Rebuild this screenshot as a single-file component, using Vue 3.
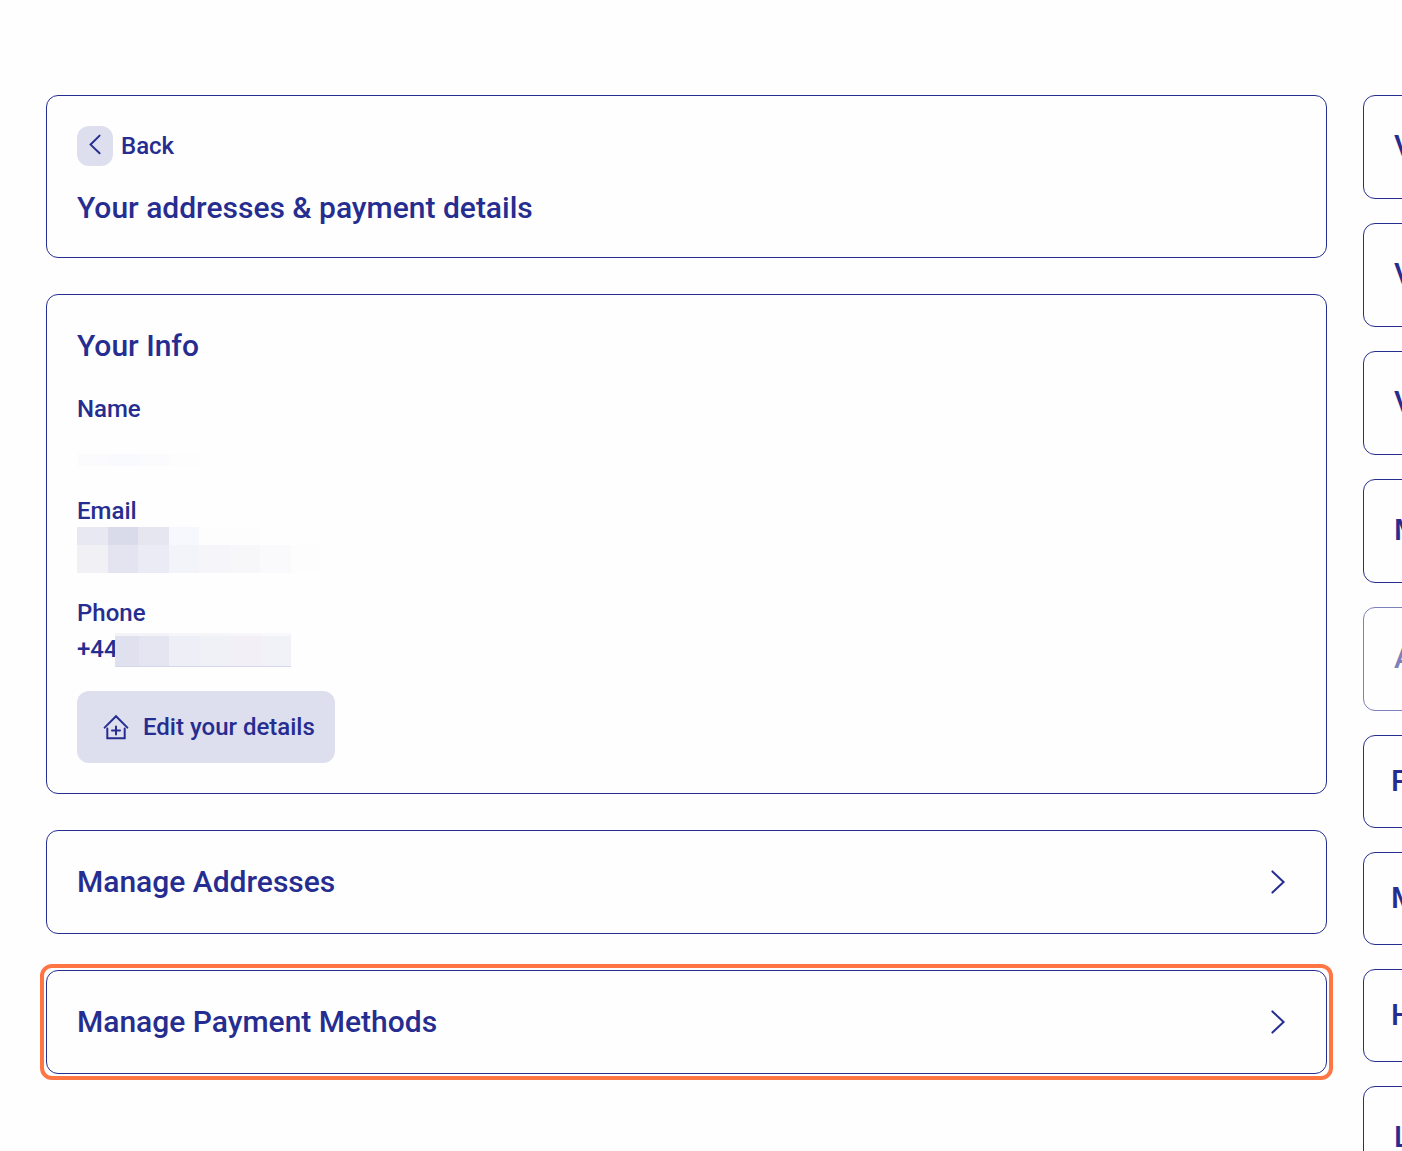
<template>
  <div class="account">
    <main class="content">
      <header class="card card-header">
        <button type="button" class="back">
          <span class="back-icon">
            <svg width="36" height="40" viewBox="0 0 36 40" aria-hidden="true">
              <path d="M22.6 9.6 13.6 18.6 22.6 27.2" />
            </svg>
          </span>
          Back
        </button>
        <h1>Your addresses &amp; payment details</h1>
      </header>

      <section class="card card-info">
        <h2>Your Info</h2>
        <dl>
          <div v-for="field in fields" :key="field.id" class="field">
            <dt>{{ field.label }}</dt>
            <dd>
              {{ field.value }}
              <span :class="['mask', `mask-${field.id}`]">
                <span v-for="(row, r) in field.mask" :key="r" class="mask-row">
                  <i v-for="(color, c) in row" :key="c" :style="{ background: color }"></i>
                </span>
              </span>
            </dd>
          </div>
        </dl>
        <button type="button" class="edit">
          <svg width="38" height="38" viewBox="0 0 38 38" aria-hidden="true">
            <path d="M7.6 19.6 19 8.2 30.4 19.6M10.3 20.6V30.2H27.7V20.6M19 18.4V26.4M15 22.4H23" />
          </svg>
          Edit your details
        </button>
      </section>

      <button
        v-for="link in links"
        :key="link.text"
        type="button"
        :class="['card', 'card-link', { highlighted: link.highlighted }]"
      >
        {{ link.text }}
        <svg width="36" height="36" viewBox="0 0 36 36" aria-hidden="true">
          <path d="M12.4 7.4 23.6 18 12.4 28.6" />
        </svg>
      </button>
    </main>

    <nav class="sidebar">
      <button
        v-for="(item, i) in menu"
        :key="i"
        type="button"
        :class="['card', 'menu-item', { compact: item.compact }]"
        :disabled="item.disabled"
      >
        {{ item.text }}
      </button>
    </nav>
  </div>
</template>

<script setup>
const fields = [
  {
    id: 'name',
    label: 'Name',
    value: '',
    mask: [['#fbfbfd', '#f9fafd', '#fbfbfd', '#fdfdfe']],
  },
  {
    id: 'email',
    label: 'Email',
    value: '',
    mask: [
      ['#e8e8f2', '#d9dbea', '#e6e6f0', '#f7f8fd', '#fdfdfd', '#fdfdfd', '#fefefe', '#fefefe'],
      ['#f0f0f5', '#e4e4f1', '#ebebf5', '#f3f4fa', '#f6f5fa', '#f7f7fa', '#fafafc', '#fdfdfd'],
    ],
  },
  {
    id: 'phone',
    label: 'Phone',
    value: '+44',
    mask: [
      ['#f3f3f8', '#f3f3f8', '#f5f5fa', '#f6f6f9', '#f7f6f9', '#f9f9fb'],
      ['#dfe1ee', '#e5e5f1', '#eeeef7', '#f0f1f6', '#f2f0f6', '#f1f2f7'],
    ],
  },
]

const links = [
  { text: 'Manage Addresses' },
  { text: 'Manage Payment Methods', highlighted: true },
]

const menu = [
  { text: 'V' },
  { text: 'V' },
  { text: 'V' },
  { text: 'M' },
  { text: 'A', disabled: true },
  { text: 'P', compact: true },
  { text: 'M', compact: true },
  { text: 'H', compact: true },
  { text: 'L' },
]
</script>

<style>
body {
  margin: 0;
  background: #fefefe;
}
</style>

<style scoped>
.account {
  --blue: #262d90;
  --tint: #dedfee;
  box-sizing: border-box;
  display: flex;
  align-items: flex-start;
  gap: 36px;
  height: 100vh;
  padding: 95px 0 0 46px;
  overflow: hidden;
  color: var(--blue);
  font-family: Roboto, sans-serif;
  font-size: 24px;
  font-weight: 500;
  line-height: 36px;
}
.content {
  display: flex;
  flex: 1;
  flex-direction: column;
  gap: 36px;
  min-width: 0;
}
button {
  margin: 0;
  padding: 0;
  border: 0;
  background: none;
  color: inherit;
  font: inherit;
  text-align: left;
  cursor: pointer;
}
svg {
  flex: none;
  fill: none;
  stroke: var(--blue);
  stroke-width: 2;
  stroke-linecap: round;
}
.card {
  box-sizing: border-box;
  padding: 30px;
  border: 1px solid var(--blue);
  border-radius: 12px;
}
h1,
h2,
.card-link,
.menu-item {
  margin: 0;
  font-size: 30px;
  font-weight: 500;
  line-height: 42px;
}

/* Header */
.card-header {
  display: flex;
  flex-direction: column;
  align-items: flex-start;
  gap: 21px;
  padding-bottom: 28px;
}
.back {
  display: flex;
  align-items: center;
  gap: 8px;
}
.back-icon {
  display: flex;
  border-radius: 12px;
  background: var(--tint);
}

/* Personal details */
dl {
  display: flex;
  flex-direction: column;
  gap: 30px;
  margin: 24px 0;
}
dd {
  position: relative;
  height: 36px;
  margin: 0;
}
.mask {
  position: absolute;
  display: flex;
  flex-direction: column;
}
.mask-row {
  display: flex;
  height: 12px;
}
.mask-row i {
  flex: 1;
}
.mask-name {
  top: 27px;
  left: 1px;
  width: 122px;
}
.mask-email {
  top: -2px;
  left: 0;
  width: 244px;
}
.mask-email .mask-row {
  height: 18px;
}
.mask-email .mask-row:last-child {
  height: 28px;
}
.mask-phone {
  top: 2px;
  left: 38px;
  width: 176px;
  border-bottom: 1px solid #d5d6ea;
}
.mask-phone .mask-row {
  height: 3px;
}
.mask-phone .mask-row:last-child {
  height: 30px;
}
.mask-phone i:first-child {
  flex: 0 0 24px;
}
.edit {
  display: flex;
  align-items: center;
  gap: 8px;
  height: 72px;
  padding: 0 20px;
  border-radius: 12px;
  background: var(--tint);
}

/* Navigation cards */
.card-link {
  position: relative;
  display: flex;
  align-items: center;
  justify-content: space-between;
}
.highlighted::after {
  position: absolute;
  inset: -7px;
  border: 4px solid #ff7543;
  border-radius: 12px;
  content: '';
}

/* The menu runs past the right edge of the window */
.sidebar {
  display: flex;
  flex: 0 0 39px;
  flex-direction: column;
  gap: 24px;
  min-width: 0;
}
.menu-item {
  width: 400px;
  padding: 29px 30px 31px;
}
.menu-item.compact {
  padding: 24px 27px 25px;
}
.menu-item:disabled {
  opacity: 0.6;
  cursor: default;
}
</style>
